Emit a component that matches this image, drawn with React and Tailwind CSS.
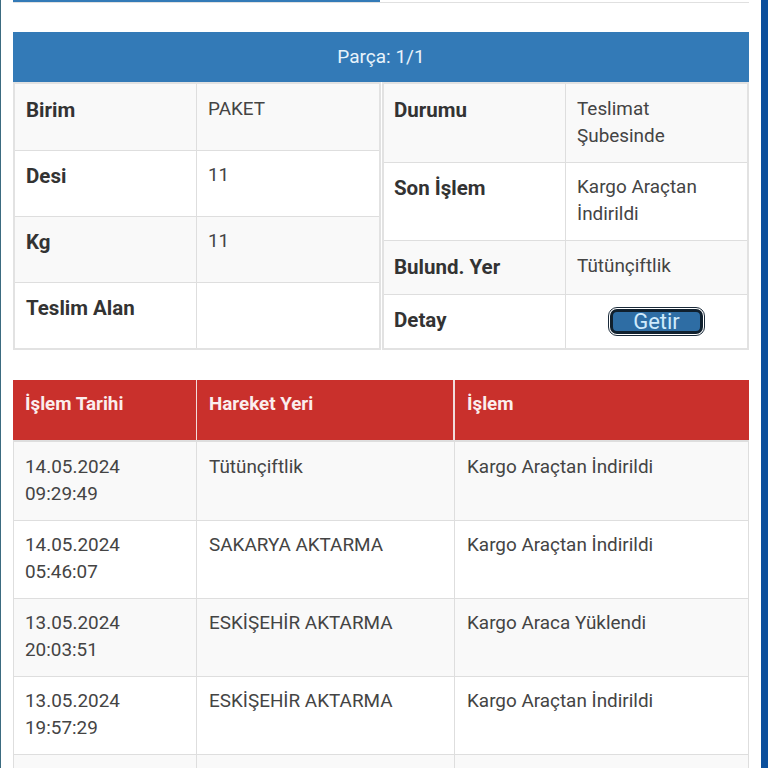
import React from 'react';

const leftRows = [
  { label: 'Birim', value: 'PAKET', h: 'h-[66px]', bg: 'bg-[#f9f9f9]', pt: 'pt-[11px]' },
  { label: 'Desi', value: '11', h: 'h-[66px]', bg: 'bg-white', pt: 'pt-[10px]' },
  { label: 'Kg', value: '11', h: 'h-[66px]', bg: 'bg-[#f9f9f9]', pt: 'pt-[10px]' },
  { label: 'Teslim Alan', value: '', h: 'h-[66px]', bg: 'bg-white', pt: 'pt-[10px]' },
];

const rightRows = [
  { label: 'Durumu', value: 'Teslimat Şubesinde', h: 'h-[78px]', bg: 'bg-[#f9f9f9]', pt: 'pt-[11px]' },
  { label: 'Son İşlem', value: 'Kargo Araçtan İndirildi', h: 'h-[78px]', bg: 'bg-white', pt: 'pt-[10px]' },
  { label: 'Bulund. Yer', value: 'Tütünçiftlik', h: 'h-[54px]', bg: 'bg-[#f9f9f9]', pt: 'pt-[11px]' },
  { label: 'Detay', button: true, h: 'h-[54px]', bg: 'bg-white', pt: 'pt-[10px]' },
];

const moves = [
  { date: '14.05.2024', time: '09:29:49', place: 'Tütünçiftlik', action: 'Kargo Araçtan İndirildi', h: 'h-[80px]', bg: 'bg-[#f9f9f9]', first: true },
  { date: '14.05.2024', time: '05:46:07', place: 'SAKARYA AKTARMA', action: 'Kargo Araçtan İndirildi', h: 'h-[78px]', bg: 'bg-white' },
  { date: '13.05.2024', time: '20:03:51', place: 'ESKİŞEHİR AKTARMA', action: 'Kargo Araca Yüklendi', h: 'h-[78px]', bg: 'bg-[#f9f9f9]' },
  { date: '13.05.2024', time: '19:57:29', place: 'ESKİŞEHİR AKTARMA', action: 'Kargo Araçtan İndirildi', h: 'h-[78px]', bg: 'bg-white' },
  { date: '', time: '', place: '', action: '', h: 'h-[78px]', bg: 'bg-[#f9f9f9]' },
];

const InfoTable = ({ rows, className, labelPad }) => (
  <div className={`border-2 border-[#e2e2e2] ${className}`}>
    {rows.map((row) => (
      <div key={row.label} className={`flex border-t border-[#dedede] first:border-t-0 ${row.h} ${row.bg}`}>
        <div className={`w-[182px] shrink-0 border-r border-[#dedede] text-[20.5px] leading-[30px] font-bold text-[#333] ${labelPad} ${row.pt}`}>
          {row.label}
        </div>
        {row.button ? (
          <div className="flex flex-1 justify-center pt-[12px]">
            <button className="h-[29px] w-[97px] rounded-[9px] border border-[#1a2a3a] bg-white p-px">
              <span className="flex h-full w-full items-center justify-center rounded-[7px] border-[3px] border-[#10202e] bg-[#2e6da4] text-[22px] leading-none text-[#cfeafc]">
                Getir
              </span>
            </button>
          </div>
        ) : (
          <div className={`flex-1 pl-[11px] pr-3 text-[18.9px] leading-[27px] text-[#444] ${row.pt}`}>
            {row.value}
          </div>
        )}
      </div>
    ))}
  </div>
);

export default function App() {
  return (
    <div className="relative h-[768px] w-[768px] overflow-hidden bg-white font-['Roboto','Liberation_Sans',sans-serif]">
      {/* Window edges */}
      <div className="absolute top-0 bottom-0 left-0 w-px bg-[#3b6b80]" />
      <div className="absolute top-0 right-0 bottom-0 w-[7px] bg-[#0b4f9c]" />

      <div className="w-[749px] pl-[13px]">
        {/* Progress bar */}
        <div className="flex h-[3px] border-b border-[#e0e0e0]">
          <div className="h-[2px] w-[367px] bg-[#337ab7]" />
        </div>

        {/* Parça */}
        <div className="mt-[29px] flex h-[50px] items-center justify-center bg-[#337ab7] text-[19px] text-[#e8f3fb]">
          Parça: 1/1
        </div>
        <div className="flex h-[268px] items-stretch">
          <InfoTable rows={leftRows} labelPad="pl-[11px]" className="w-[368px]" />
          <InfoTable rows={rightRows} labelPad="pl-[10px]" className="ml-px w-[367px]" />
        </div>

        {/* Hareketler */}
        <div className="mt-[30px]">
          <div className="flex h-[60px] bg-[#c9302c] text-[18.8px] leading-[27px] font-bold text-[#fbeeee]">
            <div className="w-[184px] border-r border-[#f2dcdc] pl-3 pt-[11px]">İşlem Tarihi</div>
            <div className="w-[258px] border-r-2 border-[#f2dcdc] pl-3 pt-[11px]">Hareket Yeri</div>
            <div className="flex-1 pl-3 pt-[11px]">İşlem</div>
          </div>
          {moves.map((move, i) => (
            <div
              key={i}
              className={`flex border-r border-l border-[#dedede] text-[18.9px] leading-[27px] text-[#444] ${move.first ? 'border-t-2' : 'border-t'} ${move.h} ${move.bg}`}
            >
              <div className={`w-[183px] border-r border-[#dedede] pl-[11px] ${move.first ? 'pt-[11px]' : 'pt-[10px]'}`}>
                {move.date}
                <br />
                {move.time}
              </div>
              <div className={`w-[258px] border-r border-[#dedede] pl-3 ${move.first ? 'pt-[11px]' : 'pt-[10px]'}`}>{move.place}</div>
              <div className={`flex-1 pl-3 ${move.first ? 'pt-[11px]' : 'pt-[10px]'}`}>{move.action}</div>
            </div>
          ))}
        </div>
      </div>
    </div>
  );
}
